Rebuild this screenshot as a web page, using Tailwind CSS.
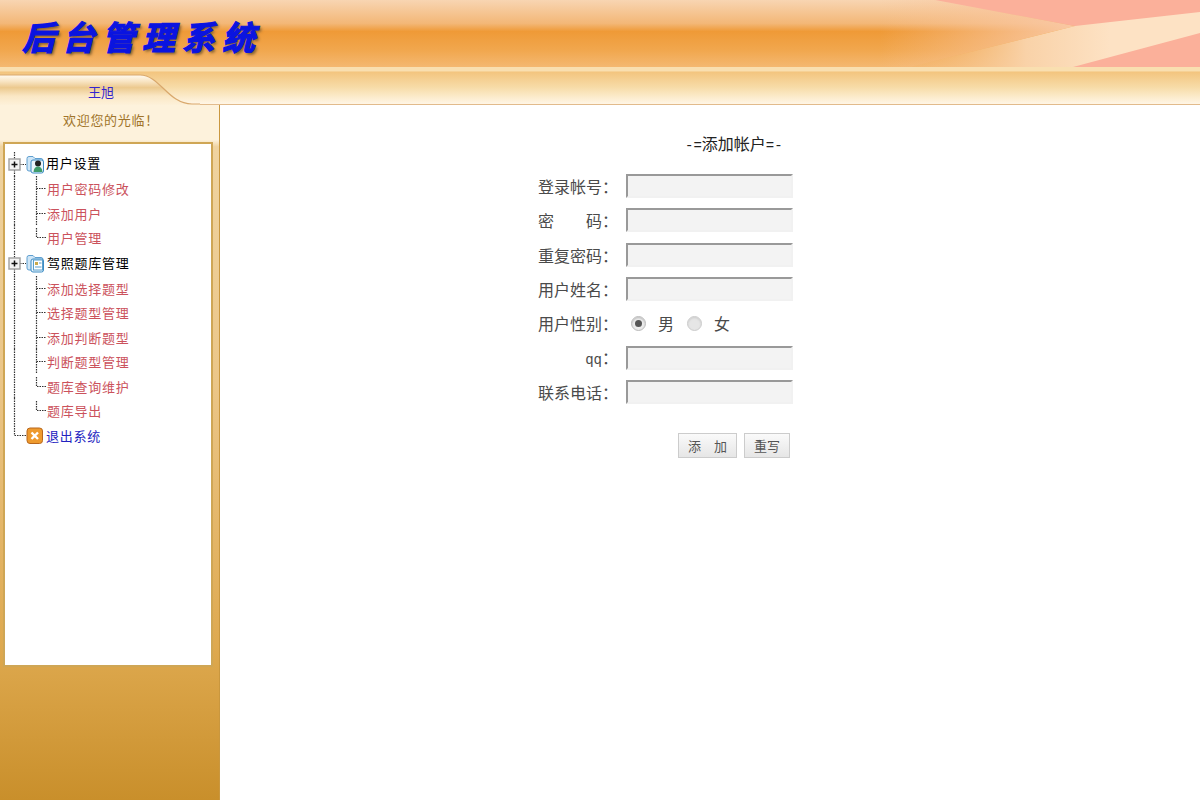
<!DOCTYPE html>
<html lang="zh-CN">
<head>
    <meta charset="UTF-8">
    <title>后台管理系统</title>
    <script src="https://cdn.jsdelivr.net/npm/@tailwindcss/browser@4"></script>
</head>
<body class="h-[800px] overflow-hidden bg-white font-['Noto_Sans_CJK_SC','Liberation_Sans',sans-serif]">
    <svg class="hidden">
        <symbol id="leaf" viewBox="0 0 42 25"><path d="M9.500 0V25M31.500 0V25M31.500 12.500H41" fill="none" stroke="#333" stroke-width="1.200" stroke-dasharray="1.500 1"/></symbol>
        <symbol id="leaf-end" viewBox="0 0 42 25"><path d="M9.500 0V25M31.500 3V12.500H41" fill="none" stroke="#333" stroke-width="1.200" stroke-dasharray="1.500 1"/></symbol>
        <symbol id="plus" viewBox="0 0 21 25"><path d="M9.500 0V7M9.500 18V25M15 12.500H21" fill="none" stroke="#333" stroke-width="1.200" stroke-dasharray="1.500 1"/><rect x="4" y="7" width="11" height="11" fill="#f4f4f4" stroke="#a5a5a5" stroke-width="1.500"/><path d="M6.500 12.500H12.500M9.500 9.500V15.500" stroke="#111" stroke-width="1.500"/></symbol>
        <symbol id="folder" viewBox="0 0 18 20"><path d="M1 4.500Q1 2.500 3 2.500H7L9 4.500H15Q17 4.500 17 6.500V15Q17 17 15 17H3Q1 17 1 15Z" fill="#cfe6f7" stroke="#5f9fd0"/><rect x="5" y="6" width="12.500" height="13" rx="2" fill="#e9f5fc" stroke="#3d8cc4"/></symbol>
    </svg>

    <!-- banner -->
    <header class="relative h-[67px] overflow-hidden bg-[linear-gradient(180deg,#f8d5b2_0%,#f3b777_35%,#ef9a37_47%,#f1a74e_75%,#f4b871_100%)]">
        <svg class="absolute inset-0" width="1200" height="67" viewBox="0 0 1200 67">
            <defs>
                <linearGradient id="wash" gradientUnits="userSpaceOnUse" x1="880" x2="1075" y1="0" y2="0"><stop offset="0" stop-color="#f9c49a" stop-opacity="0"/><stop offset="1" stop-color="#f9c8a4"/></linearGradient>
                <linearGradient id="ray" gradientUnits="userSpaceOnUse" x1="900" x2="1110" y1="0" y2="0"><stop offset="0" stop-color="#f5bd80" stop-opacity="0"/><stop offset=".6" stop-color="#f9d2a8"/><stop offset="1" stop-color="#fde2c4"/></linearGradient>
            </defs>
            <path d="M860 0H935L1075 26L910 67H860Z" fill="url(#wash)"/>
            <path d="M935 0H1200V67H1073L1075 26Z" fill="#fbb09a"/>
            <path d="M910 67L1075 26L1200 12V33L1073 67Z" fill="url(#ray)"/>
        </svg>
        <h1 class="relative pl-[22px] pt-[11px] text-[33px] leading-[50px] font-bold italic tracking-[7px] text-[#0a14e0] [-webkit-text-stroke:1.2px_#0a14e0] [text-shadow:2px_2px_3px_#7a5a30]">后台管理系统</h1>
    </header>

    <!-- user band -->
    <div class="relative h-[38px] border-b border-[#e2bb8c] bg-[linear-gradient(180deg,#f9dfb0_0%,#f9dfb0_10%,#f3c57f_14%,#f7dca8_55%,#fff6e6_100%)]">
        <svg class="absolute left-0 top-0" width="200" height="38" viewBox="0 0 200 38">
            <defs>
                <linearGradient id="tab" x1="0" x2="0" y1="0" y2="1"><stop offset="0" stop-color="#fffaf0"/><stop offset=".2" stop-color="#f9e6c6"/><stop offset=".42" stop-color="#ecc98e"/><stop offset=".7" stop-color="#fae7c4"/><stop offset="1" stop-color="#fdf1da"/></linearGradient>
            </defs>
            <path d="M0 8H140C160 8 168 37 192 37H200V38H0Z" fill="url(#tab)"/>
            <path d="M0 8H140C160 8 168 37 192 37H200" fill="none" stroke="#d9a86c" stroke-width="1.200"/>
        </svg>
        <div class="relative w-[202px] pt-[15px] text-center text-[13px] leading-5 text-[#3324d0]">王旭</div>
    </div>

    <div class="flex h-[695px]">
        <!-- left menu -->
        <aside class="flex w-[220px] flex-col border-r border-[#c9973f] bg-[linear-gradient(180deg,#fdf2dc_0%,#fdf2dc_5%,#efd3a0_6%,#ebc688_40%,#dea94f_78%,#c98f2b_100%)] pl-[3px]">
            <p class="h-[37px] pl-[60px] pt-[5px] text-[13px] leading-5 tracking-[0.7px] text-[#a0742a]">欢迎您的光临！</p>
            <nav class="h-[525px] w-[210px] border-2 border-[#cfa655] bg-white pt-[8px] text-[13px] tracking-[0.75px] text-[#cb525c]">
                <a class="flex h-[24.5px] items-center text-black"><svg class="h-[25px] w-[21px] shrink-0"><use href="#plus"/></svg><svg class="h-5 w-[18px] shrink-0"><use href="#folder"/></svg><svg class="-ml-[11px] mt-[4px] h-3 w-[10px] shrink-0" viewBox="0 0 10 12"><circle cx="5" cy="3.500" r="3" fill="#222"/><path d="M0.500 12Q1 6.500 5 6.500T9.500 12Z" fill="#3f9c6a"/></svg><span class="mb-[3px] ml-[3px]">用户设置</span></a>
                <a class="flex h-[24.5px] items-center"><svg class="h-[25px] w-[42px] shrink-0"><use href="#leaf"/></svg>用户密码修改</a>
                <a class="flex h-[24.5px] items-center"><svg class="h-[25px] w-[42px] shrink-0"><use href="#leaf"/></svg>添加用户</a>
                <a class="flex h-[24.5px] items-center"><svg class="h-[25px] w-[42px] shrink-0"><use href="#leaf-end"/></svg>用户管理</a>
                <a class="flex h-[26px] items-center text-black"><svg class="h-[25px] w-[21px] shrink-0"><use href="#plus"/></svg><svg class="h-5 w-[18px] shrink-0"><use href="#folder"/></svg><svg class="-ml-[11px] mt-[4px] h-3 w-[10px] shrink-0" viewBox="0 0 10 12"><rect x="0.500" y="1" width="9" height="10" fill="#fff" stroke="#5b9fcb"/><rect x="2" y="3" width="3" height="3" fill="#c9a94a"/><path d="M6 4H8.500M2 8H8.500" stroke="#5b9fcb"/></svg><span class="ml-[4px]">驾照题库管理</span></a>
                <a class="flex h-[24.5px] items-center"><svg class="h-[25px] w-[42px] shrink-0"><use href="#leaf"/></svg>添加选择题型</a>
                <a class="flex h-[24.5px] items-center"><svg class="h-[25px] w-[42px] shrink-0"><use href="#leaf"/></svg>选择题型管理</a>
                <a class="flex h-[24.5px] items-center"><svg class="h-[25px] w-[42px] shrink-0"><use href="#leaf"/></svg>添加判断题型</a>
                <a class="flex h-[24.5px] items-center"><svg class="h-[25px] w-[42px] shrink-0"><use href="#leaf"/></svg>判断题型管理</a>
                <a class="flex h-[24.5px] items-center"><svg class="h-[25px] w-[42px] shrink-0"><use href="#leaf-end"/></svg>题库查询维护</a>
                <a class="flex h-[24.5px] items-center"><svg class="h-[25px] w-[42px] shrink-0"><use href="#leaf-end"/></svg>题库导出</a>
                <a class="flex h-[25px] items-center text-[#2222c0]">
                    <svg class="h-[25px] w-[21px] shrink-0" viewBox="0 0 21 25"><path d="M9.500 0V12.500H21" fill="none" stroke="#333" stroke-width="1.200" stroke-dasharray="1.500 1"/></svg>
                    <svg class="h-[18px] w-[18px] shrink-0" viewBox="0 0 18 18"><rect x="1" y="1" width="15.500" height="15.500" rx="3" fill="#ee9a2e" stroke="#b8671c"/><path d="M5.500 5.500L12 12M12 5.500L5.500 12" stroke="#fff" stroke-width="2.400"/></svg>
                    <span class="ml-[2px]">退出系统</span>
                </a>
            </nav>
        </aside>

        <!-- add account form -->
        <main class="flex-1 pl-[318px] pt-[26px] text-base text-[#4a4a4a]">
            <h2 class="h-[38px] pl-[147px] leading-6 text-[#222]"><span class="font-['Liberation_Mono'] text-sm">-=</span>添加帐户<span class="font-['Liberation_Mono'] text-sm">=-</span></h2>
            <form class="w-[255px]">
                <label class="flex h-[34.33px] items-center"><span class="w-[80px] text-right">登录帐号：</span><input type="text" class="ml-[8px] h-[24px] w-[167px] border-2 border-[#f1f1f1] border-t-[#999] border-l-[#999] bg-[#f3f3f3]"></label>
                <label class="flex h-[34.33px] items-center"><span class="w-[80px] text-right">密　　码：</span><input type="password" class="ml-[8px] h-[24px] w-[167px] border-2 border-[#f1f1f1] border-t-[#999] border-l-[#999] bg-[#f3f3f3]"></label>
                <label class="flex h-[34.33px] items-center"><span class="w-[80px] text-right">重复密码：</span><input type="password" class="ml-[8px] h-[24px] w-[167px] border-2 border-[#f1f1f1] border-t-[#999] border-l-[#999] bg-[#f3f3f3]"></label>
                <label class="flex h-[34.33px] items-center"><span class="w-[80px] text-right">用户姓名：</span><input type="text" class="ml-[8px] h-[24px] w-[167px] border-2 border-[#f1f1f1] border-t-[#999] border-l-[#999] bg-[#f3f3f3]"></label>
                <div class="flex h-[34.33px] items-center">
                    <span class="w-[80px] text-right">用户性别：</span>
                    <span class="ml-[13px] flex h-[15px] w-[15px] items-center justify-center rounded-full border border-[#bbb] bg-[#ececec] shadow-[inset_0_1px_2px_#bbb]"><span class="h-[7px] w-[7px] rounded-full bg-[#555]"></span></span>
                    <span class="ml-[12px]">男</span>
                    <span class="ml-[13px] h-[15px] w-[15px] rounded-full border border-[#ccc] bg-[#e6e6e6] shadow-[inset_0_1px_2px_#ccc]"></span>
                    <span class="ml-[12px]">女</span>
                </div>
                <label class="flex h-[34.33px] items-center"><span class="w-[80px] text-right"><span class="font-['Liberation_Mono'] text-sm">qq</span>：</span><input type="text" class="ml-[8px] h-[24px] w-[167px] border-2 border-[#f1f1f1] border-t-[#999] border-l-[#999] bg-[#f3f3f3]"></label>
                <label class="flex h-[34.33px] items-center"><span class="w-[80px] text-right">联系电话：</span><input type="text" class="ml-[8px] h-[24px] w-[167px] border-2 border-[#f1f1f1] border-t-[#999] border-l-[#999] bg-[#f3f3f3]"></label>
                <div class="mt-[24px] flex gap-[7px] pl-[140px] text-[13px]">
                    <button type="button" class="h-[25px] w-[59px] border border-[#ccc] bg-[linear-gradient(180deg,#fafafa,#e6e6e6)] text-[#555]">添　加</button>
                    <button type="button" class="h-[25px] w-[46px] border border-[#ccc] bg-[linear-gradient(180deg,#fafafa,#e6e6e6)] text-[#555]">重写</button>
                </div>
            </form>
        </main>
    </div>
</body>
</html>
